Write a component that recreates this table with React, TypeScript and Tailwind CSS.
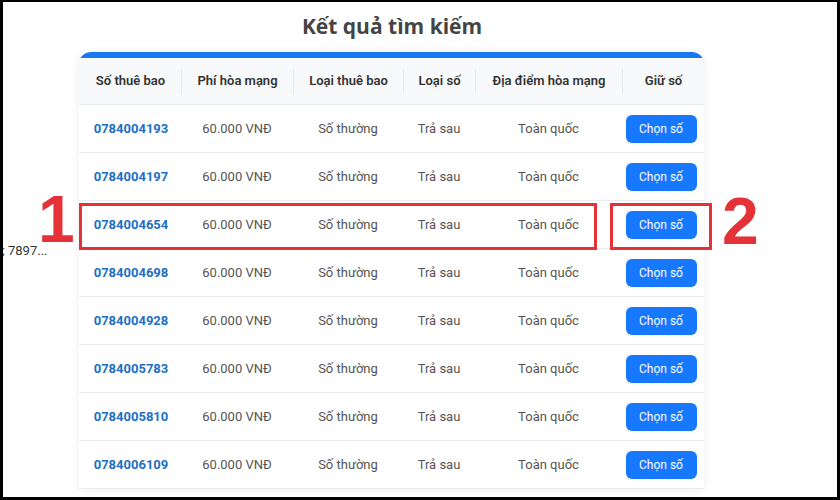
const rows = [
  "0784004193",
  "0784004197",
  "0784004654",
  "0784004698",
  "0784004928",
  "0784005783",
  "0784005810",
  "0784006109",
];

const heads = ["Số thuê bao", "Phí hòa mạng", "Loại thuê bao", "Loại số", "Địa điểm hòa mạng", "Giữ số"];

const cols = "grid grid-cols-[102px_112px_110px_72px_147px_82px]";

export default function App() {
  return (
    <div className="relative w-[840px] h-[500px] overflow-hidden bg-white font-['Roboto',sans-serif]">
      <div className="h-[52px] pt-[2px] flex items-center justify-center">
        <h1 className="font-['Open_Sans',sans-serif] text-[21px] font-bold text-[#444] ml-[-56px]">Kết quả tìm kiếm</h1>
      </div>

      <div className="ml-[79px] w-[625px] rounded-t-[12px] border-t-[6px] border-[#1877f2] bg-white shadow-[0_0_10px_rgba(0,0,0,0.07)]">
        <div className={`${cols} h-[47px] bg-[#f8f9fa] border-b border-[#ececec]`}>
          {heads.map((h, i) => (
            <div key={h} className="flex items-center">
              <div className={`h-6 w-px ${i === 0 ? "bg-transparent" : "bg-[#e6e6e6]"}`} />
              <div className="flex-1 text-center text-[13px] font-semibold text-[#333]">{h}</div>
            </div>
          ))}
        </div>
        {rows.map((n) => (
          <div key={n} className={`${cols} h-12 border-b border-[#ececec] items-center text-center text-[13px] text-[#555]`}>
            <div className="font-bold text-[#1d6fc7] pl-[2px]">{n}</div>
            <div>60.000 VNĐ</div>
            <div>Số thường</div>
            <div>Trả sau</div>
            <div>Toàn quốc</div>
            <div className="flex justify-center pr-[4px]">
              <button className="w-[71px] h-[28px] rounded-[6px] bg-[#1677ff] text-white text-[12px]">Chọn số</button>
            </div>
          </div>
        ))}
      </div>

      {/* cut-off text at left edge */}
      <div className="absolute left-[2px] top-[245px] text-[13px] leading-[12px] text-[#333]">; 7897...</div>

      {/* annotations */}
      <div className="absolute left-[79px] top-[203px] w-[518px] h-[47px] border-[3px] border-[#e53238]" />
      <div className="absolute left-[610px] top-[203px] w-[102px] h-[47px] border-[3px] border-[#e53238]" />
      <div className="absolute left-[38px] top-[196px] font-['Liberation_Sans',sans-serif] font-bold text-[66px] leading-[46px] text-[#e53238]">1</div>
      <div className="absolute left-[722px] top-[198px] font-['Liberation_Sans',sans-serif] font-bold text-[66px] leading-[46px] text-[#e53238]">2</div>

      {/* screenshot frame */}
      <div className="absolute inset-0 border-t-2 border-l-[3px] border-r-[3px] border-b-[3px] border-black pointer-events-none" />
    </div>
  );
}
